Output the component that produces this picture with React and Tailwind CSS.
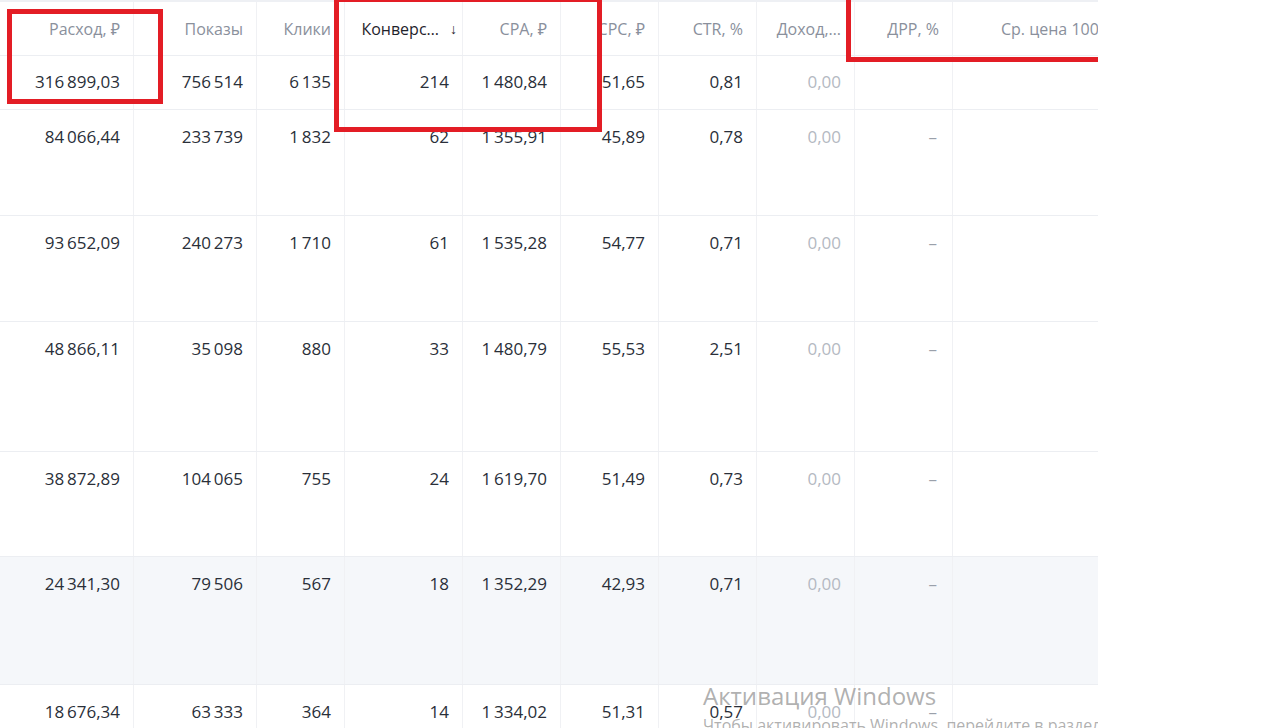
import React from 'react';

const cols = 'grid grid-cols-[134px_123px_88px_118px_98px_98px_98px_98px_98px_145px]';

const rows = [
    { h: 'h-[106px]', v: ['84 066,44', '233 739', '1 832', '62', '1 355,91', '45,89', '0,78', '0,00', '–'] },
    { h: 'h-[106px]', v: ['93 652,09', '240 273', '1 710', '61', '1 535,28', '54,77', '0,71', '0,00', '–'] },
    { h: 'h-[130px]', v: ['48 866,11', '35 098', '880', '33', '1 480,79', '55,53', '2,51', '0,00', '–'] },
    { h: 'h-[105px]', v: ['38 872,89', '104 065', '755', '24', '1 619,70', '51,49', '0,73', '0,00', '–'] },
    { h: 'h-[128px]', v: ['24 341,30', '79 506', '567', '18', '1 352,29', '42,93', '0,71', '0,00', '–'], hl: true },
    { h: 'h-[120px]', v: ['18 676,34', '63 333', '364', '14', '1 334,02', '51,31', '0,57', '0,00', '–'] },
];

const summary = ['316 899,03', '756 514', '6 135', '214', '1 480,84', '51,65', '0,81', '0,00', ''];

const headers = ['Расход, ₽', 'Показы', 'Клики', null, 'CPA, ₽', 'CPC, ₽', 'CTR, %', 'Доход,…', 'ДРР, %'];

// numbers use a thin space between groups
const fmt = (s) => s.replace(/ /g, '\u2009');

function Cell({ value, index }) {
    let color = 'text-[#2a2f39]';
    if (index === 7) color = 'text-[#b4b9c2]';
    if (index === 8) color = 'text-[#9aa0aa]';
    return (
        <div className={`border-r border-[#f0f1f4] text-right pt-[15px] leading-[24px] whitespace-nowrap ${index === 8 ? 'pr-[15px]' : 'pr-[13px]'} ${color}`}>
            {fmt(value)}
        </div>
    );
}

function Row({ values, height, highlight }) {
    return (
        <div className={`${cols} ${height} border-b border-[#eceef2] ${highlight ? 'bg-[#f5f7fa]' : 'bg-white'}`}>
            {values.map((v, i) => (
                <Cell key={i} value={v} index={i} />
            ))}
            <div />
        </div>
    );
}

export default function App() {
    return (
        <div className="w-[1269px] h-[728px] bg-white overflow-hidden font-['Open_Sans','Noto_Sans',sans-serif]">
            <div className="relative w-[1098px] h-[728px] overflow-hidden text-[17px]">
                <div className="h-[2px] bg-[#eef0f4]" />

                {/* Header */}
                <div className={`${cols} h-[54px] border-b border-[#eceef2] text-[16px]`}>
                    {headers.map((h, i) =>
                        h === null ? (
                            <div key={i} className="border-r border-[#f0f1f4] flex items-center justify-end pr-[5px] gap-[11px] text-[#1f232b]">
                                <span>Конверс…</span>
                                <span className="text-[14px]">↓</span>
                            </div>
                        ) : (
                            <div key={i} className={`border-r border-[#f0f1f4] flex items-center justify-end whitespace-nowrap text-[#8a909c] ${i === 8 ? 'pr-[13px]' : 'pr-[13px]'}`}>
                                {h}
                            </div>
                        )
                    )}
                    <div className="flex items-center pl-[48px] whitespace-nowrap text-[#8a909c]">Ср. цена 1000 показов, ₽</div>
                </div>

                {/* Totals */}
                <div className={`${cols} h-[54px] border-b border-[#eceef2]`}>
                    {summary.map((v, i) => (
                        <div key={i} className={`border-r border-[#f0f1f4] text-right pr-[13px] pt-[14px] leading-[24px] whitespace-nowrap ${i === 7 ? 'text-[#b4b9c2]' : 'text-[#2a2f39]'}`}>
                            {fmt(v)}
                        </div>
                    ))}
                    <div />
                </div>

                {rows.map((r, i) => (
                    <Row key={i} values={r.v} height={r.h} highlight={r.hl} />
                ))}

                {/* Red annotation boxes */}
                <div className="absolute left-[7px] top-[9px] w-[156px] h-[95px] border-[5px] border-[#e31d25]" />
                <div className="absolute left-[334px] top-[-3px] w-[268px] h-[135px] border-[5px] border-[#e31d25]" />
                <div className="absolute left-[846px] top-[-10px] w-[300px] h-[72px] border-[5px] border-[#e31d25]" />

                {/* Windows watermark */}
                <div className="absolute left-[703px] top-[682px] pointer-events-none whitespace-nowrap font-['Open_Sans',sans-serif] text-[#9c9c9c]/80">
                    <div className="text-[24px] leading-[28px]">Активация Windows</div>
                    <div className="text-[16px] leading-[20px] mt-[5px]">Чтобы активировать Windows, перейдите в раздел «Параметры».</div>
                </div>
            </div>
        </div>
    );
}
